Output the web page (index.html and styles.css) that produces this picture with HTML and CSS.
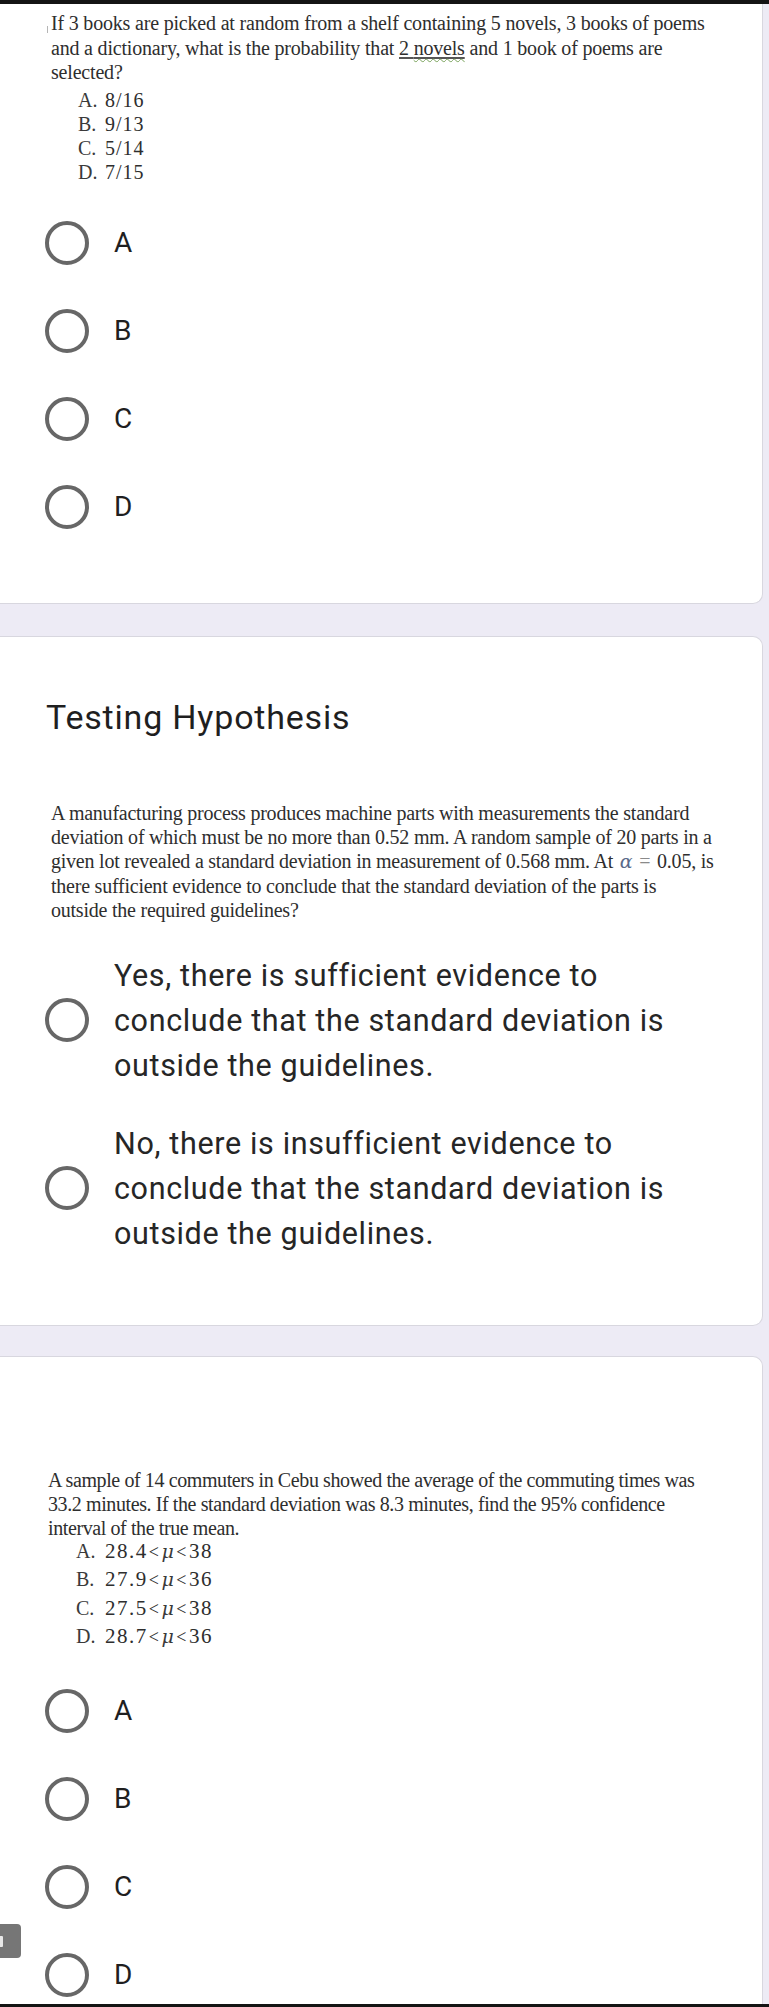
FILE: index.html
```html
<!DOCTYPE html>
<html lang="en">
<head>
<meta charset="utf-8">
<title>Quiz</title>
<link rel="stylesheet" href="styles.css">
</head>
<body>
<div class="page">
  <div class="edge edge-top"></div>

  <section class="card card-first">
    <p class="qtext q1">If 3 books are picked at random from a shelf containing 5 novels, 3 books of poems<br>and a dictionary, what is the probability that <span class="ul">2 <span class="sq">novels</span></span> and 1 book of poems are<br>selected?</p>
    <div class="choices choices-1">
      <span class="key">A.</span><span>8/16</span>
      <span class="key">B.</span><span>9/13</span>
      <span class="key">C.</span><span>5/14</span>
      <span class="key">D.</span><span>7/15</span>
    </div>
    <div class="radios">
      <label class="radio"><span class="ring"></span><span class="lbl">A</span></label>
      <label class="radio"><span class="ring"></span><span class="lbl">B</span></label>
      <label class="radio"><span class="ring"></span><span class="lbl">C</span></label>
      <label class="radio"><span class="ring"></span><span class="lbl">D</span></label>
    </div>
  </section>

  <section class="card card-mid">
    <h2 class="title">Testing Hypothesis</h2>
    <p class="qtext q2">A manufacturing process produces machine parts with measurements the standard<br>deviation of which must be no more than 0.52 mm. A random sample of 20 parts in a<br>given lot revealed a standard deviation in measurement of 0.568 mm. At <i class="math">α</i> <span class="eq">=</span> 0.05, is<br>there sufficient evidence to conclude that the standard deviation of the parts is<br>outside the required guidelines?</p>
    <div class="long-opts">
      <label class="radio long"><span class="ring"></span><span class="ltext">Yes, there is sufficient evidence to<br>conclude that the standard deviation is<br>outside the guidelines.</span></label>
      <label class="radio long"><span class="ring"></span><span class="ltext">No, there is insufficient evidence to<br>conclude that the standard deviation is<br>outside the guidelines.</span></label>
    </div>
  </section>

  <section class="card card-last">
    <p class="qtext q3">A sample of 14 commuters in Cebu showed the average of the commuting times was<br>33.2 minutes. If the standard deviation was 8.3 minutes, find the 95% confidence<br>interval of the true mean.</p>
    <div class="choices choices-3">
      <span class="key">A.</span><span class="mv">28.4<span class="lt">&lt;</span><i class="mu">μ</i><span class="lt">&lt;</span>38</span>
      <span class="key">B.</span><span class="mv">27.9<span class="lt">&lt;</span><i class="mu">μ</i><span class="lt">&lt;</span>36</span>
      <span class="key">C.</span><span class="mv">27.5<span class="lt">&lt;</span><i class="mu">μ</i><span class="lt">&lt;</span>38</span>
      <span class="key">D.</span><span class="mv">28.7<span class="lt">&lt;</span><i class="mu">μ</i><span class="lt">&lt;</span>36</span>
    </div>
    <div class="radios">
      <label class="radio"><span class="ring"></span><span class="lbl">A</span></label>
      <label class="radio"><span class="ring"></span><span class="lbl">B</span></label>
      <label class="radio"><span class="ring"></span><span class="lbl">C</span></label>
      <label class="radio"><span class="ring"></span><span class="lbl">D</span></label>
    </div>
    <div class="side-tab"><span class="tab-glyph"></span></div>
  </section>

  <div class="edge edge-bottom"></div>
</div>
</body>
</html>
```

FILE: styles.css
```css
* { box-sizing: border-box; }

html, body {
  margin: 0;
  padding: 0;
}

body {
  background: #edebf5;
  font-family: Roboto, "Noto Sans", Arial, sans-serif;
  color: #202124;
}

.page {
  width: 769px;
  height: 2007px;
  overflow: hidden;
  display: flex;
  flex-direction: column;
}

.edge {
  flex: none;
  height: 4px;
  background: #141414;
}

.card {
  flex: none;
  width: 763px;
  background: #ffffff;
  border: 1px solid #d8d7df;
  border-left: none;
  border-radius: 0 10px 10px 0;
  position: relative;
}

.card-first {
  border-top: none;
  border-radius: 0 0 10px 0;
  padding: 7px 0 52px 0;
}

.card-mid {
  margin-top: 32px;
  padding: 60px 0 69px 0;
}

.card-last {
  margin-top: 30px;
  height: 648px;
  border-bottom: none;
  border-radius: 0 10px 0 0;
  overflow: hidden;
  padding-top: 111px;
}

/* question text (pasted image look) */
.qtext {
  margin: 0;
  font-family: "Liberation Serif", "Times New Roman", serif;
  font-size: 20px;
  color: #2e2e2e;
  white-space: nowrap;
  position: relative;
}

.q1 {
  padding-left: 51px;
  line-height: 24.5px;
  letter-spacing: -0.19px;
}

.q1::before {
  content: "";
  position: absolute;
  left: 47px;
  top: 15px;
  width: 1px;
  height: 7px;
  background: #b5b5b5;
}

.q2 {
  padding-left: 51px;
  margin-top: 64px;
  line-height: 24.4px;
  letter-spacing: -0.23px;
}

.q3 {
  padding-left: 48px;
  line-height: 24px;
  letter-spacing: -0.4px;
}

.ul {
  text-decoration: underline;
  text-decoration-color: #555;
  text-underline-offset: 2px;
}

.sq {
  text-decoration: underline wavy #7aa35c;
  text-decoration-thickness: 1px;
  text-underline-offset: 3px;
}

.math {
  font-family: "DejaVu Serif", "Liberation Serif", serif;
  font-size: 19px;
  color: #5a6a8a;
  margin: 0 2px;
}

.eq {
  color: #8a8a8a;
  margin-right: 2px;
}

/* lettered choices */
.choices {
  display: grid;
  grid-template-columns: 27px auto;
  justify-content: start;
  font-family: "Liberation Serif", "Times New Roman", serif;
  font-size: 20px;
  color: #2e2e2e;
  white-space: nowrap;
}

.choices-1 {
  padding-left: 78px;
  margin-top: 3px;
  line-height: 24px;
}

.choices-1 span:nth-child(even) {
  letter-spacing: 1px;
}

.choices-3 {
  padding-left: 76px;
  margin-top: -2px;
  line-height: 27.5px;
  grid-template-columns: 29px auto;
}

.key {
  color: #3a3a3a;
}

.mv {
  font-size: 21px;
  letter-spacing: 1.5px;
}

.lt {
  font-size: 18px;
  margin: 0 1px;
}

.mu {
  font-family: "DejaVu Serif", "Liberation Serif", serif;
  font-size: 19px;
  color: #3a3a3a;
}

/* radio options */
.radios {
  display: flex;
  flex-direction: column;
}

.card-first .radios {
  margin-top: 15px;
}

.card-last .radios {
  margin-top: 15px;
}

.radio {
  display: flex;
  align-items: center;
  gap: 25px;
  padding-left: 45px;
  height: 88px;
}

.ring {
  flex: none;
  width: 44px;
  height: 44px;
  border: 4.5px solid #676767;
  border-radius: 50%;
  background: #fff;
}

.lbl {
  font-size: 28px;
  line-height: 34px;
  color: #1f1f1f;
}

.title {
  margin: 0;
  padding-left: 46px;
  font-weight: 400;
  font-size: 34px;
  line-height: 40px;
  letter-spacing: 0.8px;
  color: #1f1f1f;
}

.long-opts {
  margin-top: 30px;
  display: flex;
  flex-direction: column;
  gap: 33px;
}

.radio.long {
  height: auto;
}

.ltext {
  font-size: 30.5px;
  line-height: 45px;
  letter-spacing: 0.65px;
  color: #262626;
  white-space: nowrap;
}

/* overlay tab at left edge */
.side-tab {
  position: absolute;
  left: 0;
  top: 567px;
  width: 21px;
  height: 34px;
  background: #767676;
  border-radius: 0 4px 4px 0;
  overflow: hidden;
}

.tab-glyph {
  position: absolute;
  left: -4px;
  top: 12px;
  width: 7px;
  height: 11px;
  background: #e8e8e8;
  border-radius: 1px;
}
```
